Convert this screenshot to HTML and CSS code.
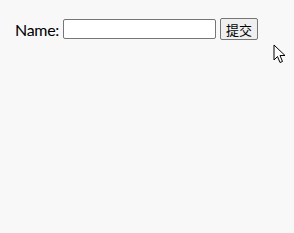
FILE: index.html
```html
<!doctype html>
<html lang="en">
<head>
	<meta charset="UTF-8">
	<title>Form</title>
	<link rel="stylesheet" href="styles.css">
</head>
<body>
	<form class="form">
		<label for="name">Name:</label>
		<input type="text" id="name" class="name">
		<button type="button" class="submit">提交</button>
	</form>
	<svg class="cursor" width="13" height="20" viewBox="0 0 13 20">
		<path d="M1 1 L1 16 L4.5 12.5 L7 18.5 L9.5 17.5 L7 11.5 L12 11.5 Z" fill="#fff" stroke="#000" stroke-width="1"/>
	</svg>
</body>
</html>
```

FILE: styles.css
```css
*{padding:0;margin:0;}
html,body{width:100%;height:100%;}
body{
	background-color:#f8f8f8;
	font-family:Lato,"Noto Sans CJK SC",sans-serif;
	font-size:16px;
	position:relative;
}
.form{
	display:flex;
	align-items:center;
	padding:18px 0 0 15px;
}
.form label{margin-right:4px;letter-spacing:-0.3px;}
.name{
	width:147px;height:16px;
	border:1px solid #767676;
	border-radius:2px;
	background:#fff;
	padding:1px 2px;
}
.submit{
	margin-left:4px;
	height:22px;
	padding:0 5px;
	font-family:"Noto Sans CJK SC",sans-serif;
	font-size:13px;
	background:#efefef;
	border:1px solid #767676;
	border-radius:2px;
	color:#000;
}
.cursor{
	position:absolute;
	left:273px;top:44px;
}
```
